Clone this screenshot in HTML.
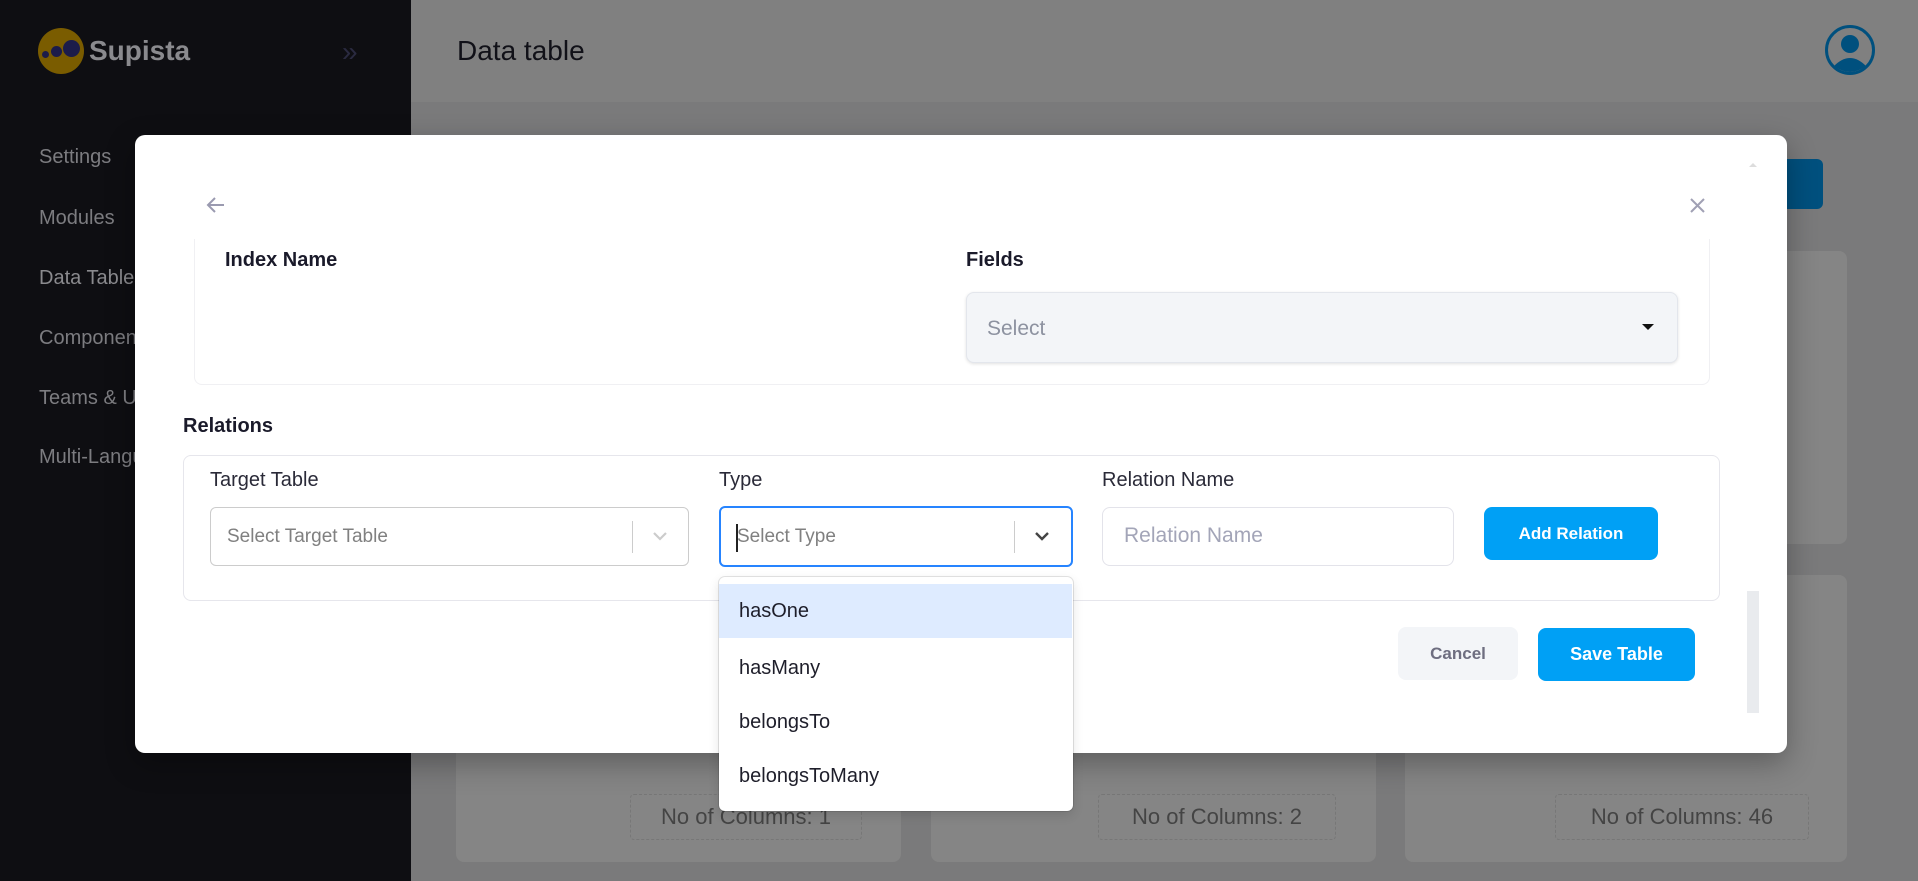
<!DOCTYPE html>
<html><head><meta charset="utf-8"><style>
*{box-sizing:border-box;margin:0;padding:0}
body{width:1918px;height:881px;overflow:hidden;background:#808080;font-family:"Liberation Sans",sans-serif;position:relative}
.a{position:absolute}
.side{left:0;top:0;width:411px;height:881px;background:#0e0e12}
.nav{left:39px;color:#7c7c80;font-size:20px}
.card{background:#858585;border-radius:8px}
.cnt{border:1px dashed #777;border-radius:4px;color:#444;font-size:22px;display:flex;align-items:center;justify-content:center}
.modal{left:135px;top:135px;width:1652px;height:618px;background:#fff;border-radius:10px;box-shadow:0 10px 30px rgba(0,0,0,.3)}
.lbl{color:#2a2a38;font-size:20px}
.btn{border-radius:8px;color:#fff;font-weight:bold;font-size:17px;display:flex;align-items:center;justify-content:center}
.opt{left:719px;width:353px;height:54px;font-size:20px;color:#1e1e2a;padding-left:20px;display:flex;align-items:center}
</style></head><body>
<div class="a" style="left:0;top:0;width:1918px;height:2px;background:#4a4d55"></div>
<div class="a side"></div>
<div class="a" style="left:38px;top:28px;width:46px;height:46px;border-radius:50%;background:#7a5c00"></div>
<div class="a" style="left:42px;top:51px;width:7px;height:7px;border-radius:50%;background:#1c1c4a"></div>
<div class="a" style="left:51px;top:46px;width:11px;height:11px;border-radius:50%;background:#1c1c4a"></div>
<div class="a" style="left:63px;top:40px;width:17px;height:17px;border-radius:50%;background:#1c1c4a"></div>
<div class="a" style="left:89px;top:35px;color:#8a8a8e;font-size:28px;font-weight:bold">Supista</div>
<div class="a" style="left:342px;top:36px;color:#2a2a40;font-size:28px">»</div>
<div class="a nav" style="top:146px">Settings</div>
<div class="a nav" style="top:207px">Modules</div>
<div class="a nav" style="top:267px;color:#8a8a8e">Data Tables</div>
<div class="a nav" style="top:327px">Components</div>
<div class="a nav" style="top:387px">Teams &amp; Users</div>
<div class="a nav" style="top:446px">Multi-Language</div>
<div class="a" style="left:411px;top:0;width:1507px;height:102px;background:#808080"></div>
<div class="a" style="left:411px;top:102px;width:1507px;height:779px;background:#7a7a7b"></div>
<div class="a" style="left:457px;top:35px;color:#111118;font-size:28px">Data table</div>
<svg class="a" style="left:1824px;top:24px" width="52" height="52" viewBox="0 0 52 52"><circle cx="26" cy="26" r="23.5" fill="none" stroke="#00507e" stroke-width="3"/><circle cx="26" cy="20" r="9" fill="#00507e"/><path d="M10 42 Q26 26 42 42 Q26 54 10 42Z" fill="#00507e"/></svg>
<div class="a" style="left:1761px;top:159px;width:62px;height:50px;background:#00507e;border-radius:6px"></div>
<div class="a card" style="left:1744px;top:251px;width:103px;height:293px"></div>
<div class="a card" style="left:456px;top:575px;width:445px;height:287px"></div>
<div class="a card" style="left:931px;top:575px;width:445px;height:287px"></div>
<div class="a card" style="left:1405px;top:575px;width:442px;height:287px"></div>
<div class="a cnt" style="left:630px;top:794px;width:232px;height:46px">No of Columns: 1</div>
<div class="a cnt" style="left:1098px;top:794px;width:238px;height:46px">No of Columns: 2</div>
<div class="a cnt" style="left:1555px;top:794px;width:254px;height:46px">No of Columns: 46</div>

<div class="a modal"></div>
<svg class="a" style="left:206px;top:196px" width="20" height="18" viewBox="0 0 20 18"><path d="M18 9H3M9 2L2 9l7 7" fill="none" stroke="#9a9ab0" stroke-width="2"/></svg>
<svg class="a" style="left:1689px;top:197px" width="17" height="17" viewBox="0 0 17 17"><path d="M2 2l13 13M15 2L2 15" stroke="#a0a0b4" stroke-width="2"/></svg>
<div class="a" style="left:1749px;top:163px;width:0;height:0;border-left:4px solid transparent;border-right:4px solid transparent;border-bottom:4px solid #ddd"></div>
<div class="a" style="left:194px;top:239px;width:1516px;height:146px;border:1px solid #f0f0f3;border-top:none;border-radius:0 0 8px 8px"></div>
<div class="a" style="left:225px;top:249px;color:#1a1a2a;font-size:20px;font-weight:bold">Index Name</div>
<div class="a" style="left:966px;top:249px;color:#1a1a2a;font-size:20px;font-weight:bold">Fields</div>
<div class="a" style="left:966px;top:292px;width:712px;height:71px;background:#f3f5f8;border:1px solid #e3e6ec;border-radius:8px;box-shadow:0 1px 3px rgba(0,0,0,.12)"></div>
<div class="a" style="left:987px;top:317px;color:#8d92a0;font-size:21px">Select</div>
<div class="a" style="left:1642px;top:324px;border-left:6px solid transparent;border-right:6px solid transparent;border-top:6px solid #111"></div>

<div class="a" style="left:183px;top:415px;color:#1a1a2a;font-size:20px;font-weight:bold">Relations</div>
<div class="a" style="left:183px;top:455px;width:1537px;height:146px;border:1px solid #e6e6ec;border-radius:8px"></div>
<div class="a lbl" style="left:210px;top:469px">Target Table</div>
<div class="a lbl" style="left:719px;top:469px">Type</div>
<div class="a lbl" style="left:1102px;top:469px">Relation Name</div>
<div class="a" style="left:210px;top:507px;width:479px;height:59px;border:1px solid #ccc;border-radius:6px"></div>
<div class="a" style="left:227px;top:526px;color:#808080;font-size:19px">Select Target Table</div>
<div class="a" style="left:632px;top:521px;width:1px;height:32px;background:#ccc"></div>
<svg class="a" style="left:651px;top:530px" width="18" height="12" viewBox="0 0 18 12"><path d="M3 3l6 6 6-6" fill="none" stroke="#ccc" stroke-width="2.2"/></svg>
<div class="a" style="left:719px;top:506px;width:354px;height:61px;border:2px solid #2684ff;border-radius:6px"></div>
<div class="a" style="left:737px;top:526px;color:#808080;font-size:19px">Select Type</div>
<div class="a" style="left:736px;top:524px;width:1.5px;height:28px;background:#222"></div>
<div class="a" style="left:1014px;top:521px;width:1px;height:32px;background:#ccc"></div>
<svg class="a" style="left:1033px;top:530px" width="18" height="12" viewBox="0 0 18 12"><path d="M3 3l6 6 6-6" fill="none" stroke="#444" stroke-width="2.4"/></svg>
<div class="a" style="left:1102px;top:507px;width:352px;height:59px;border:1px solid #e3e3ea;border-radius:8px"></div>
<div class="a" style="left:1124px;top:524px;color:#a3a5b8;font-size:21px">Relation Name</div>
<div class="a btn" style="left:1484px;top:507px;width:174px;height:53px;background:#00a0f5">Add Relation</div>

<div class="a btn" style="left:1398px;top:627px;width:120px;height:53px;background:#f3f5f8;color:#6e6e80">Cancel</div>
<div class="a btn" style="left:1538px;top:628px;width:157px;height:53px;background:#00a0f5;font-size:18px">Save Table</div>
<div class="a" style="left:1747px;top:591px;width:12px;height:122px;background:#e9ebee"></div>

<div class="a" style="left:719px;top:577px;width:354px;height:234px;background:#fff;border-radius:6px;box-shadow:0 0 0 1px rgba(0,0,0,.1),0 4px 11px rgba(0,0,0,.12)"></div>
<div class="a opt" style="top:584px;background:#deebff">hasOne</div>
<div class="a opt" style="top:641px">hasMany</div>
<div class="a opt" style="top:695px">belongsTo</div>
<div class="a opt" style="top:749px">belongsToMany</div>
</body></html>
